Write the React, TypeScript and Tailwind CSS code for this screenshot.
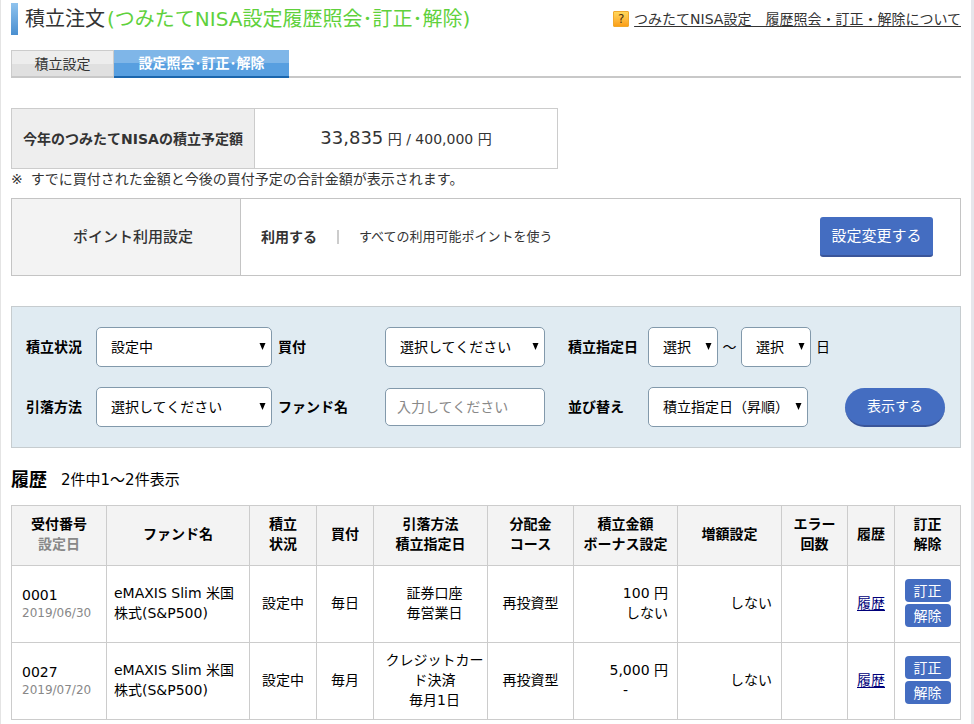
import React, { useState } from 'react';

interface Order {
  no: string;
  date: string;
  fund: string;
  status: string;
  cycle: string;
  payment: string;
  payDay: string;
  course: string;
  amount: string;
  bonus: string;
  increase: string;
}

const orders: Order[] = [
  {
    no: '0001',
    date: '2019/06/30',
    fund: 'eMAXIS Slim 米国株式(S&P500)',
    status: '設定中',
    cycle: '毎日',
    payment: '証券口座',
    payDay: '毎営業日',
    course: '再投資型',
    amount: '100 円',
    bonus: 'しない',
    increase: 'しない',
  },
  {
    no: '0027',
    date: '2019/07/20',
    fund: 'eMAXIS Slim 米国株式(S&P500)',
    status: '設定中',
    cycle: '毎月',
    payment: 'クレジットカード決済',
    payDay: '毎月1日',
    course: '再投資型',
    amount: '5,000 円',
    bonus: '-',
    increase: 'しない',
  },
];

const columns = [
  { lines: ['受付番号', '設定日'], width: 'w-[95px]' },
  { lines: ['ファンド名'], width: 'w-[143px]' },
  { lines: ['積立', '状況'], width: 'w-[67px]' },
  { lines: ['買付'], width: 'w-[57px]' },
  { lines: ['引落方法', '積立指定日'], width: 'w-[114px]' },
  { lines: ['分配金', 'コース'], width: 'w-[86px]' },
  { lines: ['積立金額', 'ボーナス設定'], width: 'w-[104px]' },
  { lines: ['増額設定'], width: 'w-[104px]' },
  { lines: ['エラー', '回数'], width: 'w-[66px]' },
  { lines: ['履歴'], width: 'w-[47px]' },
  { lines: ['訂正', '解除'], width: 'w-[66px]' },
];

const days = Array.from({ length: 28 }, (_, i) => String(i + 1));

interface SelectBoxProps {
  id: string;
  options: string[];
  width: string;
  label?: string;
}

const SelectBox: React.FC<SelectBoxProps> = ({ id, options, width, label }) => {
  const [value, setValue] = useState(options[0]);

  return (
    <div className={`relative ${width}`}>
      <select
        id={id}
        aria-label={label}
        value={value}
        onChange={(e) => setValue(e.target.value)}
        className="h-10 w-full appearance-none rounded-[5px] border border-[#8299ab] bg-white pl-[14px] text-sm text-black"
      >
        {options.map((o) => (
          <option key={o}>{o}</option>
        ))}
      </select>
      <svg className="pointer-events-none absolute right-[6px] top-4 h-[7px] w-[7px]" viewBox="0 0 7 7">
        <path d="M.5 0h6L3.5 7z" fill="#000" />
      </svg>
    </div>
  );
};

const App: React.FC = () => {
  const [fundName, setFundName] = useState('');

  return (
    <div className="min-h-screen border-l border-r-3 border-l-[#e4e4e4] border-r-[#e6e6eb] bg-white px-[10px] pt-[3px] pb-1 font-['DejaVu_Sans','Noto_Sans_CJK_JP',sans-serif] text-sm leading-5 text-[#333]">
      <header className="flex items-center justify-between">
        <div className="flex items-center gap-[7px]">
          <span className="h-8 w-[7px] bg-linear-to-b from-[#8fc3ee] to-[#4a8fd0]"></span>
          <h1 className="text-xl leading-8">
            積立注文<span className="ml-[2px] text-[#5fd13c]">(つみたてNISA設定履歴照会･訂正･解除)</span>
          </h1>
        </div>
        <div className="flex items-center gap-[5px]">
          <span className="flex size-4 items-center justify-center rounded-[1px] border border-[#f0a92c] bg-linear-to-b from-[#ffd75a] to-[#fb9f14] text-xs leading-none text-[#4a3310]">?</span>
          <a href="#" className="underline underline-offset-2">つみたてNISA設定　履歴照会・訂正・解除について</a>
        </div>
      </header>

      <nav className="mt-[15px] flex h-7 border-b-2 border-[#c8c8c8]">
        <a href="#" className="flex h-[26px] w-[103px] items-center justify-center border border-b-0 border-[#ccc] bg-[linear-gradient(#ededed_50%,#e0e0e0_50%)]">
          積立設定
        </a>
        <a href="#" className="flex h-7 w-[175px] items-center justify-center border-b-2 border-[#1b66ad] bg-[linear-gradient(#7fb6e8_50%,#589fe0_50%)] font-bold text-white">
          設定照会･訂正･解除
        </a>
      </nav>

      <table className="mt-[30px] border-collapse">
        <tbody>
          <tr className="h-[60px]">
            <th className="w-[243px] border border-[#ccc] bg-[#eee] font-bold">今年のつみたてNISAの積立予定額</th>
            <td className="w-[303px] border border-[#ccc] text-center">
              <span className="text-lg leading-5">33,835</span> 円 / 400,000 円
            </td>
          </tr>
        </tbody>
      </table>
      <p className="flex gap-2">
        <span>※</span>
        すでに買付された金額と今後の買付予定の合計金額が表示されます。
      </p>

      <section className="mt-[9px] flex h-[78px] border border-[#c4c4c4]">
        <h2 className="flex w-[229px] items-center justify-center border-r border-[#c4c4c4] bg-[#f3f3f3] pl-[14px] text-[15px] font-medium">
          ポイント利用設定
        </h2>
        <div className="flex flex-1 items-center pr-[27px] pl-5">
          <span className="font-bold">利用する</span>
          <span className="mx-5 h-[14px] w-[2px] bg-[#ccc]"></span>
          <span className="text-[13px]">すべての利用可能ポイントを使う</span>
          <button className="ml-auto h-10 w-[113px] rounded-[3px] border-b-2 border-[#3a5599] bg-[#446dc1] text-[15px] text-white">
            設定変更する
          </button>
        </div>
      </section>

      <form
        onSubmit={(e) => e.preventDefault()}
        className="mt-[30px] grid grid-cols-[70px_182px_107px_183px_80px_1fr] items-center gap-y-5 border border-[#c6cccf] bg-[#e0ebf2] py-5 pr-[15px] pl-[14px] text-black"
      >
        <label htmlFor="status" className="font-bold">積立状況</label>
        <SelectBox id="status" width="w-[176px]" options={['設定中', '解除済']} />
        <label htmlFor="cycle" className="font-bold">買付</label>
        <SelectBox id="cycle" width="w-[160px]" options={['選択してください', '毎日', '毎月']} />
        <label htmlFor="day-from" className="font-bold">積立指定日</label>
        <div className="flex items-center">
          <SelectBox id="day-from" width="w-[70px]" options={['選択', ...days]} />
          <span className="w-[23px] text-center">～</span>
          <SelectBox id="day-to" label="積立指定日" width="w-[70px]" options={['選択', ...days]} />
          <span className="pl-[5px]">日</span>
        </div>

        <label htmlFor="payment" className="font-bold">引落方法</label>
        <SelectBox id="payment" width="w-[176px]" options={['選択してください', '証券口座', 'クレジットカード決済']} />
        <label htmlFor="fund" className="font-bold">ファンド名</label>
        <input
          id="fund"
          type="text"
          value={fundName}
          onChange={(e) => setFundName(e.target.value)}
          placeholder="入力してください"
          className="h-[38px] w-[160px] rounded-[5px] border border-[#8299ab] bg-white px-[11px] placeholder:text-[#888]"
        />
        <label htmlFor="sort" className="font-bold">並び替え</label>
        <div className="flex items-center justify-between">
          <SelectBox id="sort" width="w-[160px]" options={['積立指定日（昇順）', '積立指定日（降順）']} />
          <button type="submit" className="h-[39px] w-[100px] rounded-full border-b-2 border-[#3a5599] bg-[#446dc1] text-white">
            表示する
          </button>
        </div>
      </form>

      <div className="mt-[22px] flex items-center gap-[14px] text-black">
        <h2 className="text-lg leading-5 font-bold">履歴</h2>
        <p className="text-[15px]">2件中1～2件表示</p>
      </div>

      <table className="mt-[15px] w-full table-fixed border-collapse text-center text-black">
        <thead>
          <tr className="h-[60px] bg-[#f3f3f3]">
            {columns.map(({ lines, width }) => (
              <th key={lines.join()} className={`border border-[#ccc] pb-[3px] font-bold ${width}`}>
                {lines.map((line) => (
                  <span key={line} className={line === '設定日' ? 'block text-[#888]' : 'block'}>{line}</span>
                ))}
              </th>
            ))}
          </tr>
        </thead>
        <tbody>
          {orders.map((o) => (
            <tr key={o.no} className="h-[77px] *:border *:border-[#ccc] *:pb-[2px]">
              <td className="pl-[10px] text-left">
                {o.no}
                <span className="block text-xs leading-4 text-[#888]">{o.date}</span>
              </td>
              <td className="px-[7px] text-left">{o.fund}</td>
              <td>{o.status}</td>
              <td>{o.cycle}</td>
              <td className="pr-[3px] pl-[11px]">
                {o.payment}
                <br />
                {o.payDay}
              </td>
              <td>{o.course}</td>
              <td className="pr-[9px] text-right">
                {o.amount}
                <span className={o.bonus === '-' ? 'block pr-10' : 'block'}>{o.bonus}</span>
              </td>
              <td className="pr-[9px] text-right">{o.increase}</td>
              <td></td>
              <td>
                <a href="#" className="text-[#00007a] underline underline-offset-2">履歴</a>
              </td>
              <td>
                <div className="flex flex-col items-center gap-[2px]">
                  <button className="h-[23px] w-[46px] rounded-sm bg-[#446dc1] text-white">訂正</button>
                  <button className="h-[23px] w-[46px] rounded-sm bg-[#446dc1] text-white">解除</button>
                </div>
              </td>
            </tr>
          ))}
        </tbody>
      </table>
    </div>
  );
};

export default App;
